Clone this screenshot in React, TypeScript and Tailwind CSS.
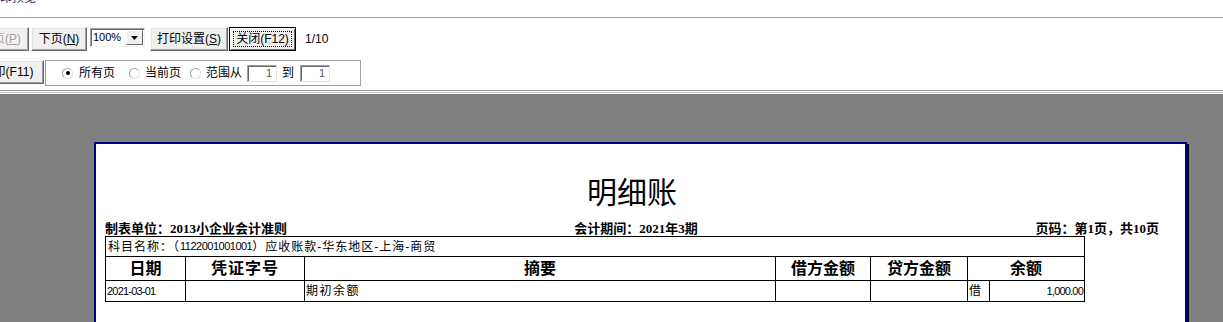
import React from "react";

function Btn({
  children,
  className = "",
  disabled = false,
}: {
  children: React.ReactNode;
  className?: string;
  disabled?: boolean;
}) {
  return (
    <div
      className={`flex items-center justify-center h-[24px] shrink-0 bg-[#f0f0f0] border border-t-white border-l-white border-r-[#696969] border-b-[#696969] shadow-[inset_-1px_-1px_0_#a0a0a0,inset_1px_1px_0_#e3e3e3] text-[12px] leading-none whitespace-nowrap ${
        disabled ? "text-[#a0a0a0] [text-shadow:1px_1px_0_#ffffff]" : "text-black"
      } ${className}`}
    >
      {children}
    </div>
  );
}

function Radio({ checked = false }: { checked?: boolean }) {
  return (
    <div className="w-[11px] h-[11px] shrink-0 rounded-full border border-t-[#a0a0a0] border-l-[#a0a0a0] border-r-[#e3e3e3] border-b-[#e3e3e3] bg-white flex items-center justify-center">
      {checked && <div className="w-[4px] h-[4px] rounded-full bg-black" />}
    </div>
  );
}

function NumBox() {
  return (
    <div className="w-[30px] h-[17px] shrink-0 border border-t-[#a0a0a0] border-l-[#a0a0a0] border-r-[#e3e3e3] border-b-[#e3e3e3] shadow-[inset_1px_1px_0_#696969] bg-white flex items-center justify-end pr-[4px] text-[11px] text-[#555555] leading-none">
      1
    </div>
  );
}

export default function App() {
  return (
    <div className="w-[1223px] h-[322px] overflow-hidden bg-white flex flex-col font-['Liberation_Sans','Noto_Sans_CJK_SC',sans-serif] text-black">
      {/* title bar remnant */}
      <div className="h-[17px] overflow-hidden shrink-0">
        <div className="-mt-[8px] -ml-[12px] text-[12px] leading-[12px] text-[#1a1a6e]">打印预览</div>
      </div>
      <div className="h-px bg-[#a0a0a0] shrink-0" />

      {/* toolbar row 1 */}
      <div className="mt-[9px] h-[24px] flex items-center shrink-0">
        <Btn disabled className="ml-[-27px] w-[56px]">
          上页(<span className="underline">P</span>)
        </Btn>
        <Btn className="ml-[2px] w-[56px]">
          下页(<span className="underline">N</span>)
        </Btn>
        <div className="ml-[3px] self-start mt-px w-[55px] h-[19px] shrink-0 border border-t-[#a0a0a0] border-l-[#a0a0a0] border-r-[#f0f0f0] border-b-[#f0f0f0] shadow-[inset_1px_1px_0_#696969] bg-white flex items-center">
          <span className="pl-[2px] text-[11px] leading-none flex-1">100%</span>
          <div className="w-[17px] h-[15px] mr-px bg-[#f0f0f0] border border-t-white border-l-white border-r-[#696969] border-b-[#696969] flex items-center justify-center">
            <svg width="7" height="4" viewBox="0 0 7 4">
              <path d="M0 0H7L3.5 4Z" fill="#000" />
            </svg>
          </div>
        </div>
        <Btn className="ml-[5px] w-[78px]">
          打印设置(<span className="underline">S</span>)
        </Btn>
        <div className="relative ml-[1px] w-[67px] h-[24px] shrink-0 bg-[#f0f0f0] border border-black shadow-[inset_1px_1px_0_#ffffff,inset_-1px_-1px_0_#696969] flex items-center justify-center text-[12px] leading-none whitespace-nowrap">
          关闭(F12)
          <div className="absolute inset-[3px] border border-dotted border-black" />
        </div>
        <span className="ml-[9px] text-[12px] leading-none">1/10</span>
      </div>

      {/* toolbar row 2 */}
      <div className="mt-[9px] h-[26px] flex items-start shrink-0">
        <Btn className="ml-[-29px] w-[73px]">打印(F11)</Btn>
        <div className="ml-[1px] w-[316px] h-[26px] shrink-0 border border-[#a0a0a0] bg-white flex items-center pl-[16px] text-[12px] leading-none">
          <Radio checked />
          <span className="ml-[6px]">所有页</span>
          <div className="ml-[14px]">
            <Radio />
          </div>
          <span className="ml-[5px]">当前页</span>
          <div className="ml-[9px]">
            <Radio />
          </div>
          <span className="ml-[5px]">范围从</span>
          <div className="ml-[5px]">
            <NumBox />
          </div>
          <span className="ml-[5px]">到</span>
          <div className="ml-[6px]">
            <NumBox />
          </div>
        </div>
      </div>

      {/* separator */}
      <div className="mt-[4px] h-px bg-[#a0a0a0] shrink-0" />
      <div className="h-px bg-white shrink-0" />
      <div className="h-px bg-[#c8c8c8] shrink-0" />
      <div className="h-px bg-white shrink-0" />

      {/* preview canvas */}
      <div className="flex-1 bg-[#808080] pt-[48px] pl-[94px] overflow-hidden">
        <div className="w-[1093px] h-[260px] border-2 border-[#000080] bg-white shadow-[2px_2px_0_#000000] pl-[9px] pt-[31px]">
          <div className="w-[1062px]">
            <div className="text-center text-[30px] leading-[30px] font-['Noto_Sans_CJK_SC',serif] pr-[8px]">
              明细账
            </div>
            <div className="mt-[17px] grid grid-cols-[1fr_auto_1fr] text-[13px] leading-[13px] font-bold font-['Liberation_Serif','Noto_Sans_CJK_SC',serif]">
              <span className="whitespace-nowrap">制表单位：2013小企业会计准则</span>
              <span className="whitespace-nowrap">会计期间：2021年3期</span>
              <span className="whitespace-nowrap justify-self-end pr-[8px]">页码：第1页，共10页</span>
            </div>
          </div>

          <div className="mt-px w-[980px] border border-black text-[12px] leading-none">
            <div className="h-[20px] border-b border-black flex items-center pl-[2px] tracking-[1px] whitespace-nowrap">
              科目名称：（<span className="text-[11px] tracking-[-0.5px]">1122001001001</span>）应收账款-华东地区-上海-商贸
            </div>
            <div className="h-[24px] border-b border-black flex text-[16px] font-bold">
              <div className="w-[80px] shrink-0 border-r border-black flex items-center justify-center">日期</div>
              <div className="w-[119px] shrink-0 border-r border-black flex items-center justify-center tracking-[1px]">凭证字号</div>
              <div className="w-[471px] shrink-0 border-r border-black flex items-center justify-center">摘要</div>
              <div className="w-[95px] shrink-0 border-r border-black flex items-center justify-center">借方金额</div>
              <div className="w-[97px] shrink-0 border-r border-black flex items-center justify-center">贷方金额</div>
              <div className="flex-1 flex items-center justify-center">余额</div>
            </div>
            <div className="h-[20px] flex">
              <div className="w-[80px] shrink-0 border-r border-black flex items-center pl-px text-[11px] tracking-[-0.8px]">2021-03-01</div>
              <div className="w-[119px] shrink-0 border-r border-black" />
              <div className="w-[471px] shrink-0 border-r border-black flex items-center pl-px tracking-[1.5px]">期初余额</div>
              <div className="w-[95px] shrink-0 border-r border-black" />
              <div className="w-[97px] shrink-0 border-r border-black" />
              <div className="w-[22px] shrink-0 border-r border-black flex items-center pl-px">借</div>
              <div className="flex-1 flex items-center justify-end pr-px text-[11px] tracking-[-0.8px]">1,000.00</div>
            </div>
          </div>
        </div>
      </div>
    </div>
  );
}
